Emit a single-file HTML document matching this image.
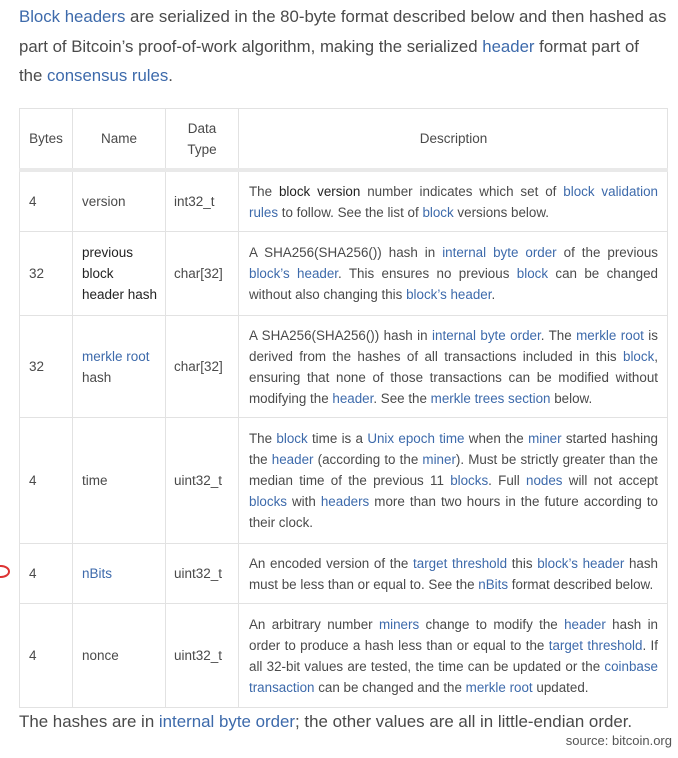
<!DOCTYPE html>
<html><head><meta charset="utf-8"><style>
body{margin:0;width:678px;height:758px;background:#fff;font-family:"Liberation Sans",sans-serif;color:#4a4a4a;position:relative;overflow:hidden}
a{color:#3d6aab;text-decoration:none}
.intro{position:absolute;left:19px;top:2px;width:660px;font-size:16.8px;line-height:29.5px;white-space:nowrap}
.r{position:absolute;left:19px;width:649px;border-bottom:1px solid #e2e2e2;box-sizing:border-box}
.c{position:absolute;top:0;bottom:0;display:flex;align-items:center;font-size:13.5px;line-height:21px;box-sizing:border-box}
.c1{left:0;width:53px;padding-left:9px;border-left:1px solid #e2e2e2}
.c2{left:53px;width:93px;padding-left:9px;border-left:1px solid #e2e2e2}
.c3{left:146px;width:73px;padding-left:8px;border-left:1px solid #e2e2e2}
.c4{left:219px;width:430px;padding:0 9px 0 10px;border-left:1px solid #e2e2e2;border-right:1px solid #e2e2e2;display:flex;flex-direction:column;justify-content:center;align-items:stretch}
.c4 div{white-space:nowrap;font-size:13.4px}
.j{text-align:justify;text-align-last:justify}
.h{justify-content:center;text-align:center;padding:0}
b{font-weight:normal;color:#222}
</style></head><body>
<div class="intro"><a>Block headers</a> are serialized in the 80-byte format described below and then hashed as<br>part of Bitcoin’s proof-of-work algorithm, making the serialized <a>header</a> format part of<br>the <a>consensus rules</a>.</div>

<div class="r" style="top:108px;height:64px;border-top:1px solid #e2e2e2;border-bottom:4px solid #e9e9e9">
<div class="c c1 h" style="padding:0">Bytes</div><div class="c c2 h">Name</div><div class="c c3 h" style="padding:0">Data<br>Type</div><div class="c c4" style="align-items:center;justify-content:center"><span>Description</span></div></div>

<div class="r" style="top:172px;height:60px">
<div class="c c1">4</div><div class="c c2">version</div><div class="c c3">int32_t</div>
<div class="c c4"><div class="j">The <b>block version</b> number indicates which set of <a>block validation</a></div><div><a>rules</a> to follow. See the list of <a>block</a> versions below.</div></div></div>

<div class="r" style="top:232px;height:84px">
<div class="c c1">32</div><div class="c c2"><span><b>previous<br>block<br>header hash</b></span></div><div class="c c3">char[32]</div>
<div class="c c4"><div class="j">A SHA256(SHA256()) hash in <a>internal byte order</a> of the previous</div><div class="j"><a>block’s header</a>. This ensures no previous <a>block</a> can be changed</div><div>without also changing this <a>block’s header</a>.</div></div></div>

<div class="r" style="top:316px;height:102px">
<div class="c c1">32</div><div class="c c2"><span><a>merkle root</a><br>hash</span></div><div class="c c3">char[32]</div>
<div class="c c4"><div class="j">A SHA256(SHA256()) hash in <a>internal byte order</a>. The <a>merkle root</a> is</div><div class="j">derived from the hashes of all transactions included in this <a>block</a>,</div><div class="j">ensuring that none of those transactions can be modified without</div><div>modifying the <a>header</a>. See the <a>merkle trees section</a> below.</div></div></div>

<div class="r" style="top:418px;height:126px">
<div class="c c1">4</div><div class="c c2">time</div><div class="c c3">uint32_t</div>
<div class="c c4"><div class="j">The <a>block</a> time is a <a>Unix epoch time</a> when the <a>miner</a> started hashing</div><div class="j">the <a>header</a> (according to the <a>miner</a>). Must be strictly greater than the</div><div class="j">median time of the previous 11 <a>blocks</a>. Full <a>nodes</a> will not accept</div><div class="j"><a>blocks</a> with <a>headers</a> more than two hours in the future according to</div><div>their clock.</div></div></div>

<div class="r" style="top:544px;height:60px">
<div class="c c1">4</div><div class="c c2"><a>nBits</a></div><div class="c c3">uint32_t</div>
<div class="c c4"><div class="j">An encoded version of the <a>target threshold</a> this <a>block’s header</a> hash</div><div>must be less than or equal to. See the <a>nBits</a> format described below.</div></div></div>

<div class="r" style="top:604px;height:104px">
<div class="c c1">4</div><div class="c c2">nonce</div><div class="c c3">uint32_t</div>
<div class="c c4"><div class="j">An arbitrary number <a>miners</a> change to modify the <a>header</a> hash in</div><div class="j">order to produce a hash less than or equal to the <a>target threshold</a>. If</div><div class="j">all 32-bit values are tested, the time can be updated or the <a>coinbase</a></div><div><a>transaction</a> can be changed and the <a>merkle root</a> updated.</div></div></div>

<div style="position:absolute;left:19px;top:712px;font-size:16.9px;white-space:nowrap">The hashes are in <a>internal byte order</a>; the other values are all in little-endian order.</div>
<div style="position:absolute;right:6px;top:733px;font-size:13px;color:#555">source: bitcoin.org</div>
<div style="position:absolute;left:-8px;top:565px;width:14px;height:9px;border:2px solid #d33;border-radius:50%"></div>
</body></html>
